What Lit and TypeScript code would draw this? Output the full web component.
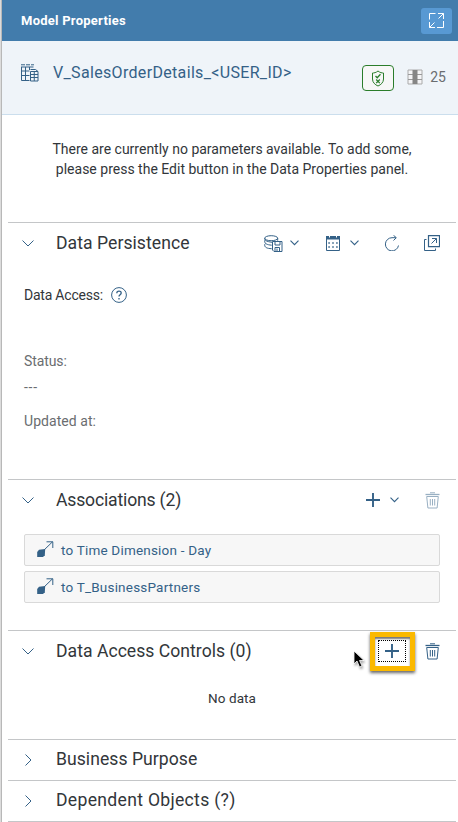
import { LitElement, html, css, svg, nothing, TemplateResult } from "lit";
import { customElement, property } from "lit/decorators.js";

const icons: Record<string, TemplateResult> = {
  expand: svg`<path d="M1.500 7.500V1.500H7.500M10 1.500h5.500V7M15.500 1.500l-5 5M1.500 10v5.500H7M1.500 15.500l5-5M15.500 9v6.500H9"/>`,
  view: svg`<path d="M1 .8h13" stroke-dasharray="4 1"/><path d="M1 3h12.500M1.500 3v13.500h8M1.500 7h8M1.500 11.500h8M5.500 3v13.500"/><path d="M9.500 3v3"/><path d="M10.500 7.500h7.500v9.500h-7.500zM10.500 10.500h7.500M10.500 13.500h7.500M14.250 7.500v9.500"/><path d="M10.500 5.500h5l2.500 2"/>`,
  shield: svg`<path d="M7 1C5 2.700 3 3 1.500 3V9c0 3.500 2.500 5.700 5.500 7 3-1.300 5.500-3.500 5.500-7V3C11 3 9 2.700 7 1z"/><path d="M4.500 6l1.700 1.700L9.500 4.300M5.200 9.500l3.600 3.600M8.800 9.500l-3.600 3.600" stroke-width="1.300"/>`,
  columns: svg`<path d="M1 1h14v14H1z" fill="#f4f4f6" stroke="#aaa"/><path d="M1 5.500h14M1 10.500h14" stroke="#999"/><path d="M5.500 1h5v14h-5z" fill="#858585" stroke="none"/>`,
  down: svg`<path d="M.5.5L6 6 11.500.5"/>`,
  right: svg`<path d="M.5.5L6 6 .5 11.500"/>`,
  small: svg`<path d="M.5.7l4 4 4-4" stroke-width="1.100"/>`,
  help: svg`<circle cx="8" cy="8" r="7.400"/><path d="M5.800 6.200C5.800 3.500 10.200 3.500 10.200 6c0 1.800-2.200 1.700-2.200 3.500M8 11v1.400" stroke-width="1.300"/>`,
  database: svg`<ellipse cx="7.200" cy="3.200" rx="6.500" ry="2.500"/><path d="M.7 3.200c0 2 1 3.300 7.500 4.100M.7 6.200c0 2.300 2 3.600 7 4M.7 6.200c0-1 .5-1.200.8-1.500M.7 10c0 2.300 2 3.500 7 3.700M.7 10c0-1 .4-1.200.8-1.500M13.700 3.200v2.500"/><path d="M8.500 6.500h9.500v10h-8l-1.500-1.500zM11 6.500v3.500h5V6.500M11 16.500v-4h4.500v4M13 13.500v3"/>`,
  calendar: svg`<path d="M1.500 2h13v13.500h-13z"/><path d="M1 1h14v3.500H1z" fill="currentColor" stroke="none"/><path d="M4.500 0v2.500M11.500 0v2.500" stroke="#fff"/><path d="M3.200 8h10M3.200 12h10" stroke-width="1.600" stroke-dasharray="1.800 2.100" opacity=".85"/>`,
  refresh: svg`<path d="M14.500 10.500A6.600 6.600 0 1 1 8 2.700h3.800M9.500.3l2.800 2.400-2.800 2.800"/>`,
  popout: svg`<path d="M4.500.6h11v11h-11z" stroke-width="1.200"/><path d="M2.500 4.500h-2v11h11v-2M7.500 8.500l5-5M8 3.500h4.500V8"/>`,
  plus: svg`<path d="M7 0v14M0 7h14" stroke-width="1.900"/>`,
  trash: svg`<path d="M.5 2.500h14" stroke-width="1.300"/><path d="M5 .8h5"/><path d="M1.700 4.500h11.600l-1.200 11.500H2.900zM5.300 7v6.500M7.500 7v6.500M9.700 7v6.500"/>`,
  link: svg`<path d="M5 11L15.500.8M9.500.8H15.800V7"/><path d="M2 8.800l6.200-.8-.4 6.300L6 16H.2V11z" fill="currentColor" stroke="none"/>`,
};

@customElement("ui-icon")
class UiIcon extends LitElement {
  @property() name = "";
  @property({ type: Number }) w = 16;
  @property({ type: Number }) h = 16;
  static styles = css`
    :host { display: block; flex: none; }
    svg { display: block; fill: none; stroke: currentColor; stroke-width: 1; }
  `;
  render() {
    return html`<svg width=${this.w} height=${this.h} viewBox="0 0 ${this.w} ${this.h}">${icons[this.name]}</svg>`;
  }
}

@customElement("panel-section")
class PanelSection extends LitElement {
  @property() heading = "";
  @property({ type: Number }) tracking = 0;
  @property({ type: Boolean }) collapsed = false;
  static styles = css`
    :host { display: block; box-sizing: border-box; border-top: 1px solid #c4c6c8; margin: 0 2px 0 6px; }
    .head { display: flex; align-items: center; height: 40px; padding: 0 16px 0 14px; box-sizing: border-box; }
    .toggle { width: 34px; color: #346187; display: flex; }
    .closed { padding-left: 3px; width: 31px; }
    h2 { margin: 0; flex: 1; font: 400 17.6px/24px Roboto, sans-serif; color: #32363a; white-space: nowrap; }
    .closed + h2 { padding-bottom: 2px; }
  `;
  render() {
    return html`<div class="head">
        <div class="toggle ${this.collapsed ? "closed" : ""}">
          ${this.collapsed
            ? html`<ui-icon name="right" w="7" h="12"></ui-icon>`
            : html`<ui-icon name="down" w="12" h="7"></ui-icon>`}
        </div>
        <h2 style="letter-spacing:${this.tracking}px">${this.heading}</h2>
        <slot name="actions"></slot>
      </div>
      ${this.collapsed ? nothing : html`<slot></slot>`}`;
  }
}

@customElement("app-root")
class AppRoot extends LitElement {
  static styles = css`
    :host { display: block; box-sizing: border-box; height: 822px; overflow: hidden; background: #fff;
      border-left: 1px solid #dcdcdc; font: 14px/20px Roboto, sans-serif; color: #32363a; position: relative; }
    .panel { border-left: 1px solid #b8b8b8; height: 822px; box-sizing: border-box; }
    .bar { height: 41px; background: #427cac; color: #fff; display: flex; align-items: center; justify-content: space-between; padding: 0 6px 0 19px; box-sizing: border-box; }
    .bar b { font-size: 13px; font-weight: 700; letter-spacing: .25px; }
    .expand { width: 31px; height: 26px; background: #5899d3; border-radius: 3px; display: flex; align-items: center; justify-content: center; }
    .entity { height: 74px; box-sizing: border-box; border-bottom: 1px solid #cbdeed; background: #eff4f9; display: flex; padding: 0 12px 0 18px; color: #346187; }
    .v { margin-top: 23px; }
    .name { font-size: 16px; margin: 22px 0 0 14px; flex: 1; letter-spacing: .33px; }
    .valid { width: 32px; height: 26px; box-sizing: border-box; border: 1px solid #2b7d2b; border-radius: 4px; background: #f7f7f7; color: #2b7d2b; display: flex; align-items: center; justify-content: center; margin-top: 24px; }
    .cols { margin: 28px 0 0 13px; }
    .count { color: #6a6d70; margin: 26px 0 0 7px; }
    .params { height: 107px; box-sizing: border-box; padding: 24px 0 0 4px; text-align: center; }
    .actions { display: flex; align-items: center; color: #346187; }
    .db-menu { margin-left: 7px; }
    .cal { margin-left: 26px; }
    .cal-menu { margin-left: 9px; }
    .reload { margin-left: 25px; }
    .open { margin-left: 24px; }
    .add-menu { margin-left: 10px; }
    .remove { margin-left: 26px; }
    .persist { height: 216px; padding-left: 16px; box-sizing: border-box; }
    .access { display: flex; align-items: center; padding-top: 22px; gap: 8px; letter-spacing: -.22px; }
    .access ui-icon { color: #346187; }
    .muted { color: #6a6d70; }
    .status { margin-top: 46px; letter-spacing: -.1px; }
    .dash { margin-top: 6px; letter-spacing: .7px; }
    .updated { margin-top: 14px; letter-spacing: .05px; }
    .list { height: 110px; box-sizing: border-box; padding: 14px 16px 0; display: flex; flex-direction: column; gap: 5px; color: #346187; font-size: 13.5px; letter-spacing: .2px; }
    .item { height: 32px; box-sizing: border-box; border: 1px solid #d9d9d9; border-radius: 2px; background: #f7f7f7; display: flex; align-items: center; gap: 7px; padding: 0 0 1px 12px; }
    .faded { opacity: .5; }
    .empty { height: 68px; box-sizing: border-box; padding-top: 17px; text-align: center; font-size: 13.5px; letter-spacing: .1px; }
    .mark { width: 45px; height: 39px; box-sizing: border-box; border: 5px solid #fbb900; box-shadow: 0 2px 3px #666, inset 0 2px 2px #777; display: flex; align-items: center; justify-content: center; padding-right: 1px; margin-right: 10px; }
    .focus { width: 28px; height: 22px; box-sizing: border-box; border: 1px dotted #000; display: flex; align-items: center; justify-content: center; }
    .cursor { position: absolute; left: 352px; top: 650px; filter: drop-shadow(1px 2px 1px #0005); }
  `;
  render() {
    return html`<div class="panel">
      <div class="bar"><b>Model Properties</b><div class="expand"><ui-icon name="expand" w="17" h="17"></ui-icon></div></div>
      <div class="entity">
        <ui-icon class="v" name="view" w="19" h="18"></ui-icon>
        <div class="name">V_SalesOrderDetails_&lt;USER_ID&gt;</div>
        <div class="valid"><ui-icon name="shield" w="14" h="17"></ui-icon></div>
        <ui-icon class="cols" name="columns"></ui-icon>
        <div class="count">25</div>
      </div>
      <div class="params">There are currently no parameters available. To add some,<br />please press the Edit button in the Data Properties panel.</div>
      <panel-section heading="Data Persistence" tracking="0.04">
        <div class="actions" slot="actions">
          <ui-icon name="database" w="19" h="17"></ui-icon><ui-icon class="db-menu" name="small" w="9" h="6"></ui-icon>
          <ui-icon class="cal" name="calendar"></ui-icon><ui-icon class="cal-menu" name="small" w="9" h="6"></ui-icon>
          <ui-icon class="reload" name="refresh"></ui-icon><ui-icon class="open" name="popout"></ui-icon>
        </div>
        <div class="persist">
          <div class="access"><span>Data Access:</span><ui-icon name="help"></ui-icon></div>
          <div class="muted status">Status:</div>
          <div class="muted dash">---</div>
          <div class="muted updated">Updated at:</div>
        </div>
      </panel-section>
      <panel-section heading="Associations (2)" tracking="-0.18">
        <div class="actions" slot="actions"><ui-icon name="plus" w="14" h="14"></ui-icon><ui-icon class="add-menu" name="small" w="9" h="6"></ui-icon><ui-icon class="faded remove" name="trash" w="15" h="17"></ui-icon></div>
        <div class="list">
          <div class="item"><ui-icon name="link" w="17" h="17"></ui-icon><span>to Time Dimension - Day</span></div>
          <div class="item"><ui-icon name="link" w="17" h="17"></ui-icon><span>to T_BusinessPartners</span></div>
        </div>
      </panel-section>
      <panel-section heading="Data Access Controls (0)" tracking="0.02">
        <div class="actions" slot="actions"><div class="mark"><div class="focus"><ui-icon name="plus" w="14" h="14"></ui-icon></div></div><ui-icon name="trash" w="15" h="17"></ui-icon></div>
        <div class="empty">No data</div>
      </panel-section>
      <panel-section heading="Business Purpose" tracking="0.04" collapsed></panel-section>
      <panel-section heading="Dependent Objects (?)" tracking="0.3" collapsed></panel-section>
      <panel-section collapsed></panel-section>
      </div>
      <svg class="cursor" width="12" height="18" viewBox="0 0 12 18"><path d="M1 1v13l3-3 2.500 6 2.500-1-2.500-5.500H11z" fill="#000" stroke="#fff" stroke-width=".8"/></svg>
    `;
  }
}
